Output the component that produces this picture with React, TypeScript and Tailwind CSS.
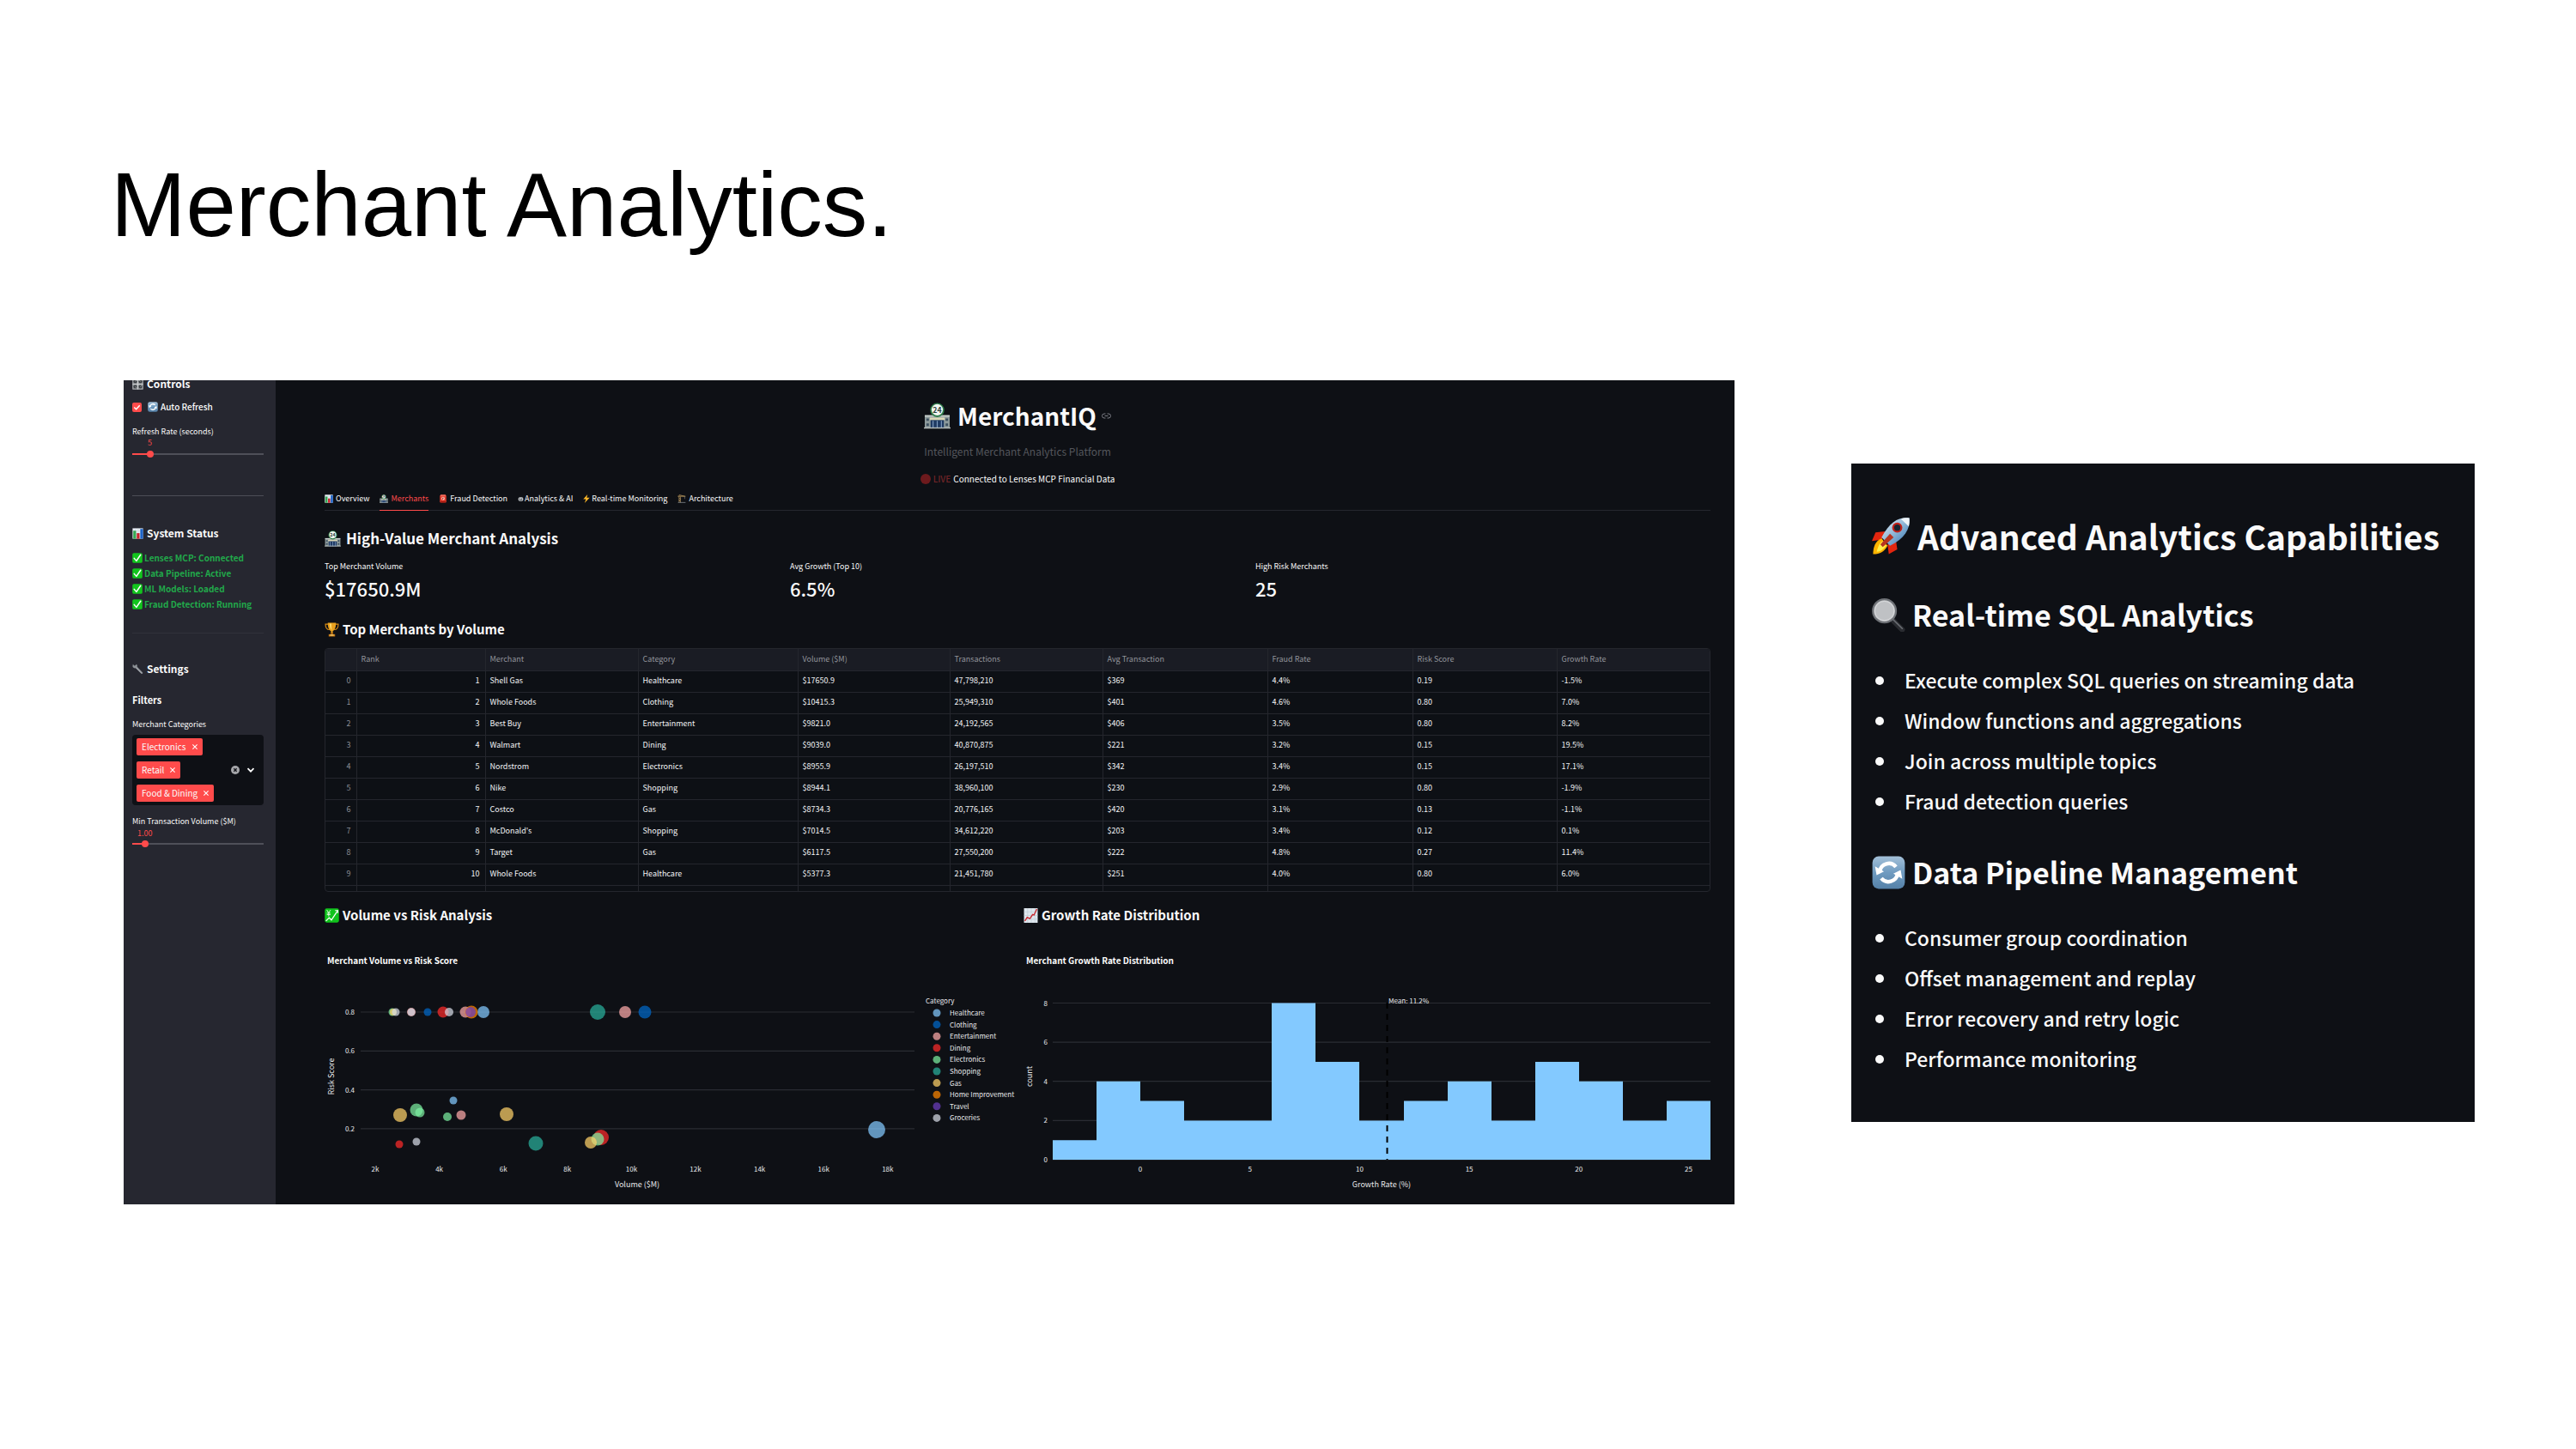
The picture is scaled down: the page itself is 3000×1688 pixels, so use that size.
import type { ReactNode } from "react";

type IconProps = { className?: string };

function Svg({ className = "", box = "0 0 32 32", children }: IconProps & { box?: string; children: ReactNode }) {
  return (
    <svg viewBox={box} className={`shrink-0 ${className}`} aria-hidden="true">
      {children}
    </svg>
  );
}

const StoreIcon = ({ className }: IconProps) => (
  <Svg className={className}>
    <rect x="1" y="16" width="30" height="15" fill="#8d9a9b" />
    <rect x="1" y="15" width="30" height="2" fill="#c9d1cd" />
    <path d="M3 19h3v3H3zM3 25h3v3H3zM26 19h3v3h-3zM26 25h3v3h-3z" fill="#3e5160" />
    <rect x="8" y="20" width="16" height="11" fill="#1f3a63" />
    <rect x="7" y="18" width="18" height="3" fill="#dcd9b8" />
    <path d="M11 22v9M16 22v9M21 22v9" stroke="#7f9cc0" strokeWidth="1.2" />
    <path d="M0 30.5h32" stroke="#b5bcba" strokeWidth="1.5" />
    <circle cx="16" cy="9" r="8.5" fill="#2f7d4b" />
    <circle cx="16" cy="8.6" r="6.8" fill="#f2f6f1" />
    <text x="16" y="12" textAnchor="middle" fontSize="9" fontWeight="700" fill="#2b3f39">24</text>
  </Svg>
);

const BarsIcon = ({ className }: IconProps) => (
  <Svg className={className}>
    <rect x="1" y="1" width="30" height="30" fill="#e9eff5" />
    <path d="M1 9h30M1 17h30M1 25h30M9 1v30M17 1v30M25 1v30" stroke="#b9c9d8" strokeWidth="1" />
    <rect x="3" y="8" width="8" height="23" fill="#35a853" />
    <rect x="13" y="15" width="8" height="16" fill="#c9202c" />
    <rect x="23" y="3" width="8" height="28" fill="#1c63c9" />
  </Svg>
);

const CheckIcon = ({ className }: IconProps) => (
  <Svg className={className}>
    <rect x="0.5" y="0.5" width="31" height="31" rx="5" fill="#12c51d" />
    <path d="M6 17l7 8L26 6" fill="none" stroke="#fff" strokeWidth="4" strokeLinecap="round" strokeLinejoin="round" />
  </Svg>
);

const SyncIcon = ({ className }: IconProps) => (
  <Svg className={className}>
    <defs>
      <linearGradient id="sync-bg" x1="0" y1="0" x2="0" y2="1">
        <stop offset="0" stopColor="#a3c0d8" />
        <stop offset="0.5" stopColor="#6f9bc0" />
        <stop offset="1" stopColor="#5581a8" />
      </linearGradient>
    </defs>
    <rect x="0.5" y="0.5" width="31" height="31" rx="6" fill="url(#sync-bg)" />
    <path d="M7.5 15a8.8 8.8 0 0 1 15.5-4.5" fill="none" stroke="#fff" strokeWidth="3.6" />
    <path d="M24.5 17a8.8 8.8 0 0 1-15.5 4.5" fill="none" stroke="#fff" strokeWidth="3.6" />
    <path d="M3 10l1.5 8.5 7-3.5zM29 22l-1.5-8.5-7 3.5z" fill="#fff" />
  </Svg>
);

const KnobsIcon = ({ className }: IconProps) => (
  <Svg className={className}>
    <rect width="32" height="32" rx="3" fill="#8e9296" />
    <path d="M16 1v30M1 16h30" stroke="#d9dcde" strokeWidth="2" />
    <circle cx="8.5" cy="8.5" r="5" fill="#3c4145" />
    <circle cx="23.5" cy="8.5" r="5" fill="#3c4145" />
    <circle cx="8.5" cy="23.5" r="5" fill="#3c4145" />
    <circle cx="23.5" cy="23.5" r="5" fill="#3c4145" />
    <path d="M8.5 8.5l3-3M23.5 8.5l-3-3M8.5 23.5l3 2M23.5 23.5l3-3" stroke="#eee" strokeWidth="1.5" />
  </Svg>
);

const WrenchIcon = ({ className }: IconProps) => (
  <Svg className={className}>
    <path d="M2 2l4 4 4-1 1-3c3 1 4 4 3 7l16 17c1 2-2 5-4 3L10 13c-4 1-8-1-9-5z" fill="#8d9297" />
    <path d="M11 12l16 16" stroke="#c7cbd0" strokeWidth="1.5" />
  </Svg>
);

const TrophyIcon = ({ className }: IconProps) => (
  <Svg className={className}>
    <path d="M8 4H2c0 7 3 12 9 12M24 4h6c0 7-3 12-9 12" fill="none" stroke="#d98b14" strokeWidth="2.2" />
    <path d="M7 1h18c0 10-3 17-7 18v5h-4v-5C10 18 7 11 7 1z" fill="#e9a11f" />
    <path d="M11 3h4c0 6 0 10 1 14-3-2-5-7-5-14z" fill="#ffd768" />
    <path d="M14 22h4l1 4h-6z" fill="#b86d0c" />
    <path d="M9 26h14v5H9z" fill="#c67b15" />
    <path d="M12 27h8v2h-8z" fill="#ffe08a" />
  </Svg>
);

const SirenIcon = ({ className }: IconProps) => (
  <Svg className={className}>
    <rect x="4" y="2" width="24" height="28" rx="4" fill="#e03a2c" />
    <rect x="6" y="1" width="20" height="6" rx="2" fill="#f26a5a" />
    <circle cx="16" cy="15" r="6" fill="#ffd3c8" />
    <path d="M13 12h6v2h-4v5h-2z" fill="#a5160d" />
    <rect x="6" y="25" width="20" height="5" fill="#a5190f" />
  </Svg>
);

const RobotIcon = ({ className }: IconProps) => (
  <Svg className={className}>
    <rect x="3" y="6" width="26" height="20" rx="8" fill="#c9cdd1" />
    <circle cx="11" cy="14" r="3" fill="#25282c" />
    <circle cx="21" cy="14" r="3" fill="#25282c" />
    <path d="M9 21h14" stroke="#25282c" strokeWidth="3" />
  </Svg>
);

const BoltIcon = ({ className }: IconProps) => (
  <Svg className={className} box="3 0 26 32">
    <path d="M20 0L4 18h10L9 32l19-20H17z" fill="#fdb827" />
  </Svg>
);

const CraneIcon = ({ className }: IconProps) => (
  <Svg className={className}>
    <path d="M6 31V3M11 31V8" stroke="#8a7047" strokeWidth="3" />
    <path d="M6 12l5 5-5 5 5 5M1 7h29M6 2l22 5" stroke="#a48754" strokeWidth="3" fill="none" />
    <path d="M27 7v10" stroke="#777" strokeWidth="2" />
    <path d="M2 30h28" stroke="#6e747a" strokeWidth="3" />
  </Svg>
);

const YenChartIcon = ({ className }: IconProps) => (
  <Svg className={className}>
    <rect x="0.5" y="0.5" width="31" height="31" rx="4" fill="#10c31c" />
    <path d="M5 4l4 6 4-6M9 10v8M5 11h8M5 14h8" stroke="#eafbe9" strokeWidth="1.7" fill="none" />
    <path d="M3 28l7-7 5 5L29 5" stroke="#fff" strokeWidth="2.4" fill="none" />
    <path d="M23 5h6v6" stroke="#fff" strokeWidth="2" fill="none" />
  </Svg>
);

const TrendIcon = ({ className }: IconProps) => (
  <Svg className={className}>
    <rect x="1" y="0" width="30" height="32" fill="#dfe7ee" />
    <path d="M1 8h30M1 16h30M1 24h30M9 0v32M17 0v32M25 0v32" stroke="#b8c6d2" />
    <path d="M3 28l5-8 6 3 6-9 3 1 6-13" stroke="#c9262d" strokeWidth="2.6" fill="none" />
  </Svg>
);

const RocketIcon = ({ className }: IconProps) => (
  <Svg className={className}>
    <defs>
      <linearGradient id="rocket-body" x1="0" y1="0" x2="1" y2="1">
        <stop offset="0" stopColor="#e9f4fb" />
        <stop offset="0.5" stopColor="#8fb6d6" />
        <stop offset="1" stopColor="#2c6fb0" />
      </linearGradient>
    </defs>
    <path d="M11 12L3 13l-3 7 8-1zM20 20l1 7-7 4-1-8z" fill="#e2260f" />
    <path d="M8 18C3 20 1 25 1 31c6 0 9-2 12-7z" fill="#ffb400" />
    <path d="M9 20c-3 2-4 5-5 9 4 0 6-3 8-5z" fill="#fff04a" />
    <path d="M31 1c-9-1-16 3-23 16l7 7C27 18 32 10 31 1z" fill="url(#rocket-body)" />
    <path d="M31 1c-3-.3-5 0-7 .7L30.500 8c.5-2 .7-4 .5-7z" fill="#eef3f7" />
    <circle cx="21" cy="9" r="4.2" fill="#c22018" />
    <circle cx="21" cy="9" r="2.6" fill="#182430" />
    <path d="M15 14l3 3-9 8-2-2z" fill="#b8341f" />
  </Svg>
);

const LensIcon = ({ className }: IconProps) => (
  <Svg className={className}>
    <path d="M19 20l10 10" stroke="#2a2c31" strokeWidth="5" strokeLinecap="round" />
    <path d="M20 20l9 9" stroke="#6c6f75" strokeWidth="1.2" strokeLinecap="round" />
    <circle cx="12" cy="12" r="11" fill="#bfc1c4" stroke="#6f7277" strokeWidth="1.8" />
    <circle cx="12" cy="12" r="9.2" fill="none" stroke="#dadbdd" strokeWidth="0.8" />
  </Svg>
);

const LinkIcon = ({ className }: IconProps) => (
  <Svg className={className} box="0 0 22 14">
    <path d="M9 2H6a5 5 0 0 0 0 10h3M13 2h3a5 5 0 0 1 0 10h-3M7 7h8" fill="none" stroke="#7b7d84" strokeWidth="2" />
  </Svg>
);

const statuses = ["Lenses MCP: Connected", "Data Pipeline: Active", "ML Models: Loaded", "Fraud Detection: Running"];
const filters = ["Electronics", "Retail", "Food & Dining"];

const RANGE =
  "block h-2 w-full cursor-pointer appearance-none bg-transparent [&::-webkit-slider-thumb]:-mt-[3px] [&::-webkit-slider-thumb]:size-2 [&::-webkit-slider-thumb]:appearance-none [&::-webkit-slider-thumb]:rounded-full [&::-webkit-slider-thumb]:bg-[#ff4b4b] [&::-webkit-slider-runnable-track]:h-0.5";

function Sidebar() {
  return (
    <aside className="w-[177px] shrink-0 bg-[#262730] pr-3.5 pl-2.5">
      <h2 className="-mt-1 flex h-4 items-center gap-1 text-[12px] leading-4 font-bold">
        <KnobsIcon className="size-[13px]" />
        Controls
      </h2>
      <label className="mt-[11px] flex h-4 items-center text-[10px] leading-4 font-medium">
        <span className="relative mr-[7px] size-[11px] shrink-0">
          <input type="checkbox" defaultChecked className="block size-[11px] appearance-none rounded-xs bg-[#ff4b4b]" />
          <svg viewBox="0 0 12 12" className="pointer-events-none absolute inset-0" aria-hidden="true">
            <path d="M2.5 6l2.5 2.5L9.5 3.5" fill="none" stroke="#fff" strokeWidth="1.6" />
          </svg>
        </span>
        <SyncIcon className="mr-[3px] size-3" />
        Auto Refresh
      </label>
      <label htmlFor="rate" className="mt-[15px] block text-[9px] leading-3">
        Refresh Rate (seconds)
      </label>
      <output htmlFor="rate" className="mt-px block pl-[18px] text-[9px] leading-3 text-[#ff4b4b]">
        5
      </output>
      <input
        id="rate"
        type="range"
        min="1"
        max="35"
        defaultValue="5"
        className={`${RANGE} mt-[3px] [&::-webkit-slider-runnable-track]:bg-[linear-gradient(to_right,#ff4b4b_13%,#4f5059_13%)]`}
      />
      <hr className="mt-11 border-[#4c4d56]" />
      <h2 className="mt-[35px] flex h-4 items-center gap-1 text-[12px] leading-4 font-bold">
        <BarsIcon className="size-[13px]" />
        System Status
      </h2>
      <ul className="mt-3 text-[10px] leading-[18px] font-bold whitespace-nowrap text-[#21a84a]">
        {statuses.map((s) => (
          <li key={s} className="flex items-center gap-0.5">
            <CheckIcon className="size-3" />
            {s}
          </li>
        ))}
      </ul>
      <hr className="mt-6 border-[#30313a]" />
      <h2 className="mt-[33px] flex h-4 items-center gap-1 text-[12px] leading-4 font-bold">
        <WrenchIcon className="size-[13px]" />
        Settings
      </h2>
      <h3 className="mt-5 text-[11px] leading-4 font-bold">Filters</h3>
      <p className="mt-[15px] text-[9px] leading-3">Merchant Categories</p>
      <div className="mt-1.5 flex items-center justify-between rounded bg-[#0e1015] py-1 pr-2.5 pl-[5px]">
        <div className="flex flex-col items-start gap-[7px]">
          {filters.map((f) => (
            <button key={f} className="flex h-5 items-center gap-[7px] rounded-xs bg-[#ff4b4b] px-1.5 text-[10px] leading-5 whitespace-nowrap">
              {f}
              <svg viewBox="0 0 8 8" className="size-[6px]" aria-hidden="true">
                <path d="M0.5 0.5l7 7M7.5 0.5l-7 7" stroke="#fff" strokeWidth="1.4" />
              </svg>
            </button>
          ))}
        </div>
        <div className="flex items-center gap-2">
          <button aria-label="Clear all">
            <svg viewBox="0 0 12 12" className="size-2.5" aria-hidden="true">
              <circle cx="6" cy="6" r="6" fill="#a5a6aa" />
              <path d="M4 4l4 4M8 4l-4 4" stroke="#15161b" strokeWidth="1.6" />
            </svg>
          </button>
          <button aria-label="Open list">
            <svg viewBox="0 0 10 10" className="size-2.5" aria-hidden="true">
              <path d="M1.5 3.2L5 6.7l3.5-3.5" fill="none" stroke="#fff" strokeWidth="1.7" />
            </svg>
          </button>
        </div>
      </div>
      <label htmlFor="volume" className="mt-[13px] block text-[9px] leading-3 whitespace-nowrap">
        Min Transaction Volume ($M)
      </label>
      <output htmlFor="volume" className="mt-0.5 block pl-1.5 text-[9px] leading-3 text-[#ff4b4b]">
        1.00
      </output>
      <input
        id="volume"
        type="range"
        min="0"
        max="13"
        defaultValue="1"
        className={`${RANGE} mt-[2px] [&::-webkit-slider-runnable-track]:bg-[linear-gradient(to_right,#ff4b4b_9%,#4f5059_9%)]`}
      />
    </aside>
  );
}

const tabs = [
  { name: "Overview", Icon: BarsIcon, look: "mr-[3px] size-2.5" },
  { name: "Merchants", Icon: StoreIcon, look: "mr-[3px] size-2.5" },
  { name: "Fraud Detection", Icon: SirenIcon, look: "mr-[3px] size-2.5" },
  { name: "Analytics & AI", Icon: RobotIcon, look: "mr-px size-[7px]" },
  { name: "Real-time Monitoring", Icon: BoltIcon, look: "mr-0.5 h-2.5 w-2" },
  { name: "Architecture", Icon: CraneIcon, look: "mr-[3px] size-2.5" },
];

const metrics = [
  ["Top Merchant Volume", "$17650.9M"],
  ["Avg Growth (Top 10)", "6.5%"],
  ["High Risk Merchants", "25"],
];

const columns = ["", "Rank", "Merchant", "Category", "Volume ($M)", "Transactions", "Avg Transaction", "Fraud Rate", "Risk Score", "Growth Rate"];

const rows = [
  ["0", "1", "Shell Gas", "Healthcare", "$17650.9", "47,798,210", "$369", "4.4%", "0.19", "-1.5%"],
  ["1", "2", "Whole Foods", "Clothing", "$10415.3", "25,949,310", "$401", "4.6%", "0.80", "7.0%"],
  ["2", "3", "Best Buy", "Entertainment", "$9821.0", "24,192,565", "$406", "3.5%", "0.80", "8.2%"],
  ["3", "4", "Walmart", "Dining", "$9039.0", "40,870,875", "$221", "3.2%", "0.15", "19.5%"],
  ["4", "5", "Nordstrom", "Electronics", "$8955.9", "26,197,510", "$342", "3.4%", "0.15", "17.1%"],
  ["5", "6", "Nike", "Shopping", "$8944.1", "38,960,100", "$230", "2.9%", "0.80", "-1.9%"],
  ["6", "7", "Costco", "Gas", "$8734.3", "20,776,165", "$420", "3.1%", "0.13", "-1.1%"],
  ["7", "8", "McDonald's", "Shopping", "$7014.5", "34,612,220", "$203", "3.4%", "0.12", "0.1%"],
  ["8", "9", "Target", "Gas", "$6117.5", "27,550,200", "$222", "4.8%", "0.27", "11.4%"],
  ["9", "10", "Whole Foods", "Healthcare", "$5377.3", "21,451,780", "$251", "4.0%", "0.80", "6.0%"],
];

function MerchantTable() {
  return (
    <div className="mt-2.5 h-[284px] overflow-hidden rounded border border-[#24262d] bg-[#0d1015]">
      <table className="w-full table-fixed border-collapse text-left text-[9px] leading-3">
        <colgroup>
          <col className="w-[36px]" />
          <col className="w-[150px]" />
          <col className="w-[178px]" />
          <col className="w-[186px]" />
          <col className="w-[177px]" />
          <col className="w-[178px]" />
          <col className="w-[192px]" />
          <col className="w-[169px]" />
          <col className="w-[168px]" />
          <col className="w-[180px]" />
        </colgroup>
        <thead>
          <tr className="h-[25px] bg-[#1a1c24] text-[#92949b]">
            {columns.map((c) => (
              <th key={c} className="border-r border-b border-[#24262d] py-0 pl-[5px] font-normal last:border-r-0">
                {c}
              </th>
            ))}
          </tr>
        </thead>
        <tbody>
          {rows.map((r) => (
            <tr key={r[0]} className="h-[25px]">
              {r.map((v, i) => (
                <td
                  key={i}
                  className={`border-r border-b border-[#24262d] pt-0 pb-px last:border-r-0 ${i < 2 ? "pr-1.5 text-right" : "pl-[5px]"} ${i === 0 ? "text-[#8b8d94]" : "text-[#f3f4f6]"}`}
                >
                  {v}
                </td>
              ))}
            </tr>
          ))}
          <tr className="h-[25px]">
            {columns.map((c) => (
              <td key={c} className="border-r border-[#24262d] last:border-r-0" />
            ))}
          </tr>
        </tbody>
      </table>
    </div>
  );
}

const palette: [string, string][] = [
  ["Healthcare", "#83c9ff"],
  ["Clothing", "#0068c9"],
  ["Entertainment", "#ffabab"],
  ["Dining", "#ff2b2b"],
  ["Electronics", "#7defa1"],
  ["Shopping", "#29b09d"],
  ["Gas", "#ffd16a"],
  ["Home Improvement", "#ff8700"],
  ["Travel", "#6d3fc0"],
  ["Groceries", "#d5dae5"],
];

// x, y, radius, palette index
const bubbles = [
  [643, 173, 10, 0], [185, 36, 7, 0], [150, 139, 4.5, 0],
  [373, 36, 7.5, 1], [120, 36, 4.5, 1],
  [350, 36, 7, 2], [164, 36, 6.5, 2], [101, 36, 5, 2], [159, 156, 5.5, 2],
  [322, 182, 9, 3], [138, 36, 6.5, 3], [87, 190, 4.5, 3],
  [318, 184, 7.5, 4], [107, 150, 7.5, 4], [111, 153, 5.5, 4], [143, 158, 5, 4], [79, 36, 4.5, 4],
  [318, 36, 9, 5], [246, 189, 8.5, 5],
  [310, 188, 7, 6], [212, 155, 8, 6], [88, 156, 8, 6], [80, 36, 4, 6],
  [171, 36, 7.5, 7],
  [170, 36, 6, 8],
  [145, 36, 5, 9], [101, 36, 4.5, 9], [83, 36, 4.5, 9], [107, 187, 4.5, 9],
];

function RiskChart() {
  return (
    <svg viewBox="0 0 800 260" className="mt-4 w-full overflow-visible text-[8px]" role="img" aria-label="Merchant Volume vs Risk Score" fill="#e8e9ec">
      {["0.8", "0.6", "0.4", "0.2"].map((t, i) => (
        <g key={t}>
          <path d={`M42 ${36 + i * 45.3}H687`} stroke="#2a2c33" strokeWidth="1.2" />
          <text x="35" y={39 + i * 45.3} textAnchor="end">{t}</text>
        </g>
      ))}
      {bubbles.map(([x, y, r, c], i) => (
        <circle key={i} cx={x} cy={y} r={r} fill={palette[c][1]} opacity="0.72" />
      ))}
      {["2k", "4k", "6k", "8k", "10k", "12k", "14k", "16k", "18k"].map((t, i) => (
        <text key={t} x={59 + i * 74.6} y="222" textAnchor="middle">{t}</text>
      ))}
      <text x="364" y="240" textAnchor="middle" fontSize="9">Volume ($M)</text>
      <text transform="translate(11 111) rotate(-90)" textAnchor="middle" fontSize="9">Risk Score</text>
      <text x="700" y="26">Category</text>
      {palette.map(([name, color], i) => (
        <g key={name}>
          <circle cx="713" cy={37 + i * 13.6} r="4.5" fill={color} opacity="0.72" />
          <text x="728" y={40 + i * 13.6}>{name}</text>
        </g>
      ))}
    </svg>
  );
}

const counts = [1, 4, 3, 2, 2, 8, 5, 2, 3, 4, 2, 5, 4, 2, 3];

function GrowthChart() {
  return (
    <svg viewBox="0 0 800 260" className="mt-4 w-full overflow-visible text-[8px]" role="img" aria-label="Merchant Growth Rate Distribution" fill="#e8e9ec">
      {[8, 6, 4, 2, 0].map((t, i) => (
        <g key={t}>
          <path d={`M34 ${25.5 + i * 45.6}H800`} stroke="#2a2c33" strokeWidth="1.2" />
          <text x="28" y={28.5 + i * 45.6} textAnchor="end">{t}</text>
        </g>
      ))}
      <path
        d={`M34 208${counts.map((c, i) => `V${208 - c * 22.8}H${34 + Math.round((i + 1) * 51.07)}`).join("")}V208Z`}
        fill="#83c9ff"
      />
      <path d="M423.5 25V208" stroke="#000" strokeWidth="2" strokeDasharray="7 6" />
      <text x="425" y="26">Mean: 11.2%</text>
      {[0, 5, 10, 15, 20, 25].map((t, i) => (
        <text key={t} x={136 + i * 127.7} y="222" textAnchor="middle">{t}</text>
      ))}
      <text x="417" y="240" textAnchor="middle" fontSize="9">Growth Rate (%)</text>
      <text transform="translate(10 111) rotate(-90)" textAnchor="middle" fontSize="9">count</text>
    </svg>
  );
}

function Dashboard() {
  return (
    <section className="flex min-w-0 overflow-hidden bg-[#0e1015] text-[#fafafa]">
      <Sidebar />
      <main className="min-w-0 flex-1 pt-[21px] pr-7 pl-[57px]">
        <header className="flex flex-col items-center">
          <h1 className="flex h-10 items-center text-[28px] leading-10 font-bold">
            <StoreIcon className="mr-2 size-[31px]" />
            MerchantIQ
            <a href="#merchantiq" aria-label="Link to heading" className="ml-1.5">
              <LinkIcon className="h-[7px] w-[11px]" />
            </a>
          </h1>
          <p className="mt-3.5 text-[12px] leading-4 text-[#54565c]">Intelligent Merchant Analytics Platform</p>
          <p className="mt-4 flex items-center text-[10px] leading-4">
            <span className="mr-[3px] size-3 rounded-full bg-[#6d1a1d]" />
            <span className="mr-[3px] font-medium text-[#722427]">LIVE</span>
            Connected to Lenses MCP Financial Data
          </p>
        </header>
        <nav className="mt-[9px] flex gap-3 border-b border-[#25272e] text-[9px] leading-3" role="tablist">
          {tabs.map(({ name, Icon, look }) => (
            <button
              key={name}
              role="tab"
              aria-selected={name === "Merchants"}
              className={`-mb-px flex items-center border-b pb-[7px] whitespace-nowrap ${name === "Merchants" ? "border-[#ff4b4b] text-[#ff4b4b]" : "border-transparent"}`}
            >
              <Icon className={look} />
              {name}
            </button>
          ))}
        </nav>
        <h2 className="mt-5 flex items-center gap-1.5 text-[17px] leading-6 font-bold">
          <StoreIcon className="size-[19px]" />
          High-Value Merchant Analysis
        </h2>
        <dl className="mt-[15px] grid grid-cols-3 gap-3">
          {metrics.map(([label, value]) => (
            <div key={label}>
              <dt className="text-[9px] leading-3">{label}</dt>
              <dd className="mt-[3px] text-[22px] leading-8 font-medium">{value}</dd>
            </div>
          ))}
        </dl>
        <h2 className="mt-5 flex items-center gap-1 text-[15px] leading-6 font-bold">
          <TrophyIcon className="size-[17px]" />
          Top Merchants by Volume
        </h2>
        <MerchantTable />
        <div className="mt-[15px] grid grid-cols-2 gap-3.5">
          <section>
            <h2 className="flex items-center gap-1 text-[15px] leading-6 font-bold">
              <YenChartIcon className="size-[17px]" />
              Volume vs Risk Analysis
            </h2>
            <h3 className="mt-[33px] pl-[3px] text-[10px] leading-4 font-bold">Merchant Volume vs Risk Score</h3>
            <RiskChart />
          </section>
          <section>
            <h2 className="flex items-center gap-1 text-[15px] leading-6 font-bold">
              <TrendIcon className="size-[17px]" />
              Growth Rate Distribution
            </h2>
            <h3 className="mt-[33px] pl-[3px] text-[10px] leading-4 font-bold">Merchant Growth Rate Distribution</h3>
            <GrowthChart />
          </section>
        </div>
      </main>
    </section>
  );
}

function FeatureList({ items }: { items: string[] }) {
  return (
    <ul className="mt-[31px] text-[23px] leading-[47px] font-medium">
      {items.map((t) => (
        <li key={t} className="flex items-center gap-6 pl-1">
          <span className="size-2.5 shrink-0 rounded-full bg-[#fafafa]" />
          {t}
        </li>
      ))}
    </ul>
  );
}

function Capabilities() {
  return (
    <section className="mt-[97px] min-w-0 bg-[#0e1015] px-6 pt-[60px] pb-[50px] text-[#fafafa]">
      <h2 className="flex items-center gap-2 text-[39px] leading-[48px] font-bold whitespace-nowrap">
        <RocketIcon className="size-[45px]" />
        Advanced Analytics Capabilities
      </h2>
      <h3 className="mt-[46px] flex items-center gap-2 text-[34px] leading-[44px] font-bold whitespace-nowrap">
        <LensIcon className="size-[39px]" />
        Real-time SQL Analytics
      </h3>
      <FeatureList
        items={[
          "Execute complex SQL queries on streaming data",
          "Window functions and aggregations",
          "Join across multiple topics",
          "Fraud detection queries",
        ]}
      />
      <h3 className="mt-[37px] flex items-center gap-2 text-[34px] leading-[44px] font-bold whitespace-nowrap">
        <SyncIcon className="size-[39px]" />
        Data Pipeline Management
      </h3>
      <FeatureList
        items={[
          "Consumer group coordination",
          "Offset management and replay",
          "Error recovery and retry logic",
          "Performance monitoring",
        ]}
      />
    </section>
  );
}

export default function App() {
  return (
    <div className="min-h-screen bg-white pt-[179px] pr-[118px] pb-40 pl-36 font-['Noto_Sans_CJK_SC','Noto_Sans',sans-serif]">
      <h1 className="-ml-[15px] font-['Liberation_Sans',Arial,sans-serif] text-[105px] leading-[120px] text-black">Merchant Analytics.</h1>
      <div className="mt-36 grid grid-cols-[1876fr_726fr] items-start gap-[136px]">
        <Dashboard />
        <Capabilities />
      </div>
    </div>
  );
}
